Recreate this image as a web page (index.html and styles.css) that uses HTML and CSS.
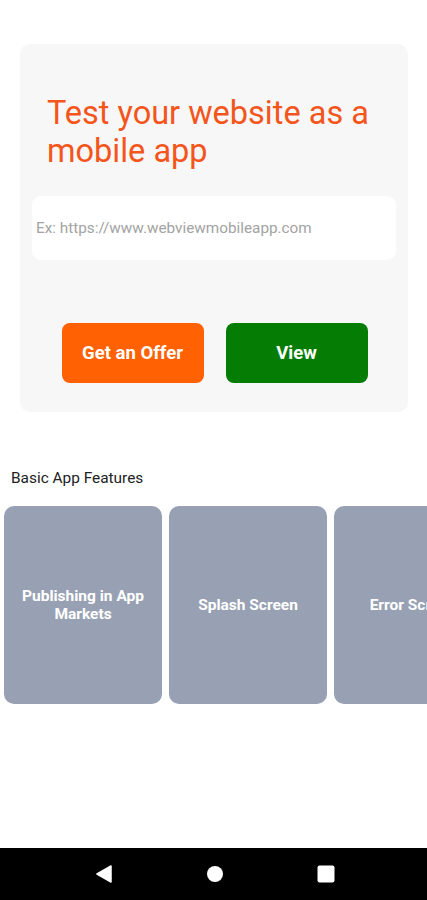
FILE: index.html
```html
<!DOCTYPE html>
<html>
<head>
<meta charset="utf-8">
<link rel="stylesheet" href="styles.css">
</head>
<body>
<div class="page">
  <main class="content">
    <section class="hero">
      <h1 class="hero-title">Test your website as a mobile app</h1>
      <div class="url-input">Ex: https://www.webviewmobileapp.com</div>
      <div class="actions">
        <button class="btn btn-offer">Get an Offer</button>
        <button class="btn btn-view">View</button>
      </div>
    </section>
    <h2 class="section-title">Basic App Features</h2>
    <div class="features">
      <div class="feature">Publishing in App Markets</div>
      <div class="feature">Splash Screen</div>
      <div class="feature">Error Screen</div>
    </div>
  </main>
  <nav class="navbar">
    <svg class="nav-icon" width="18" height="18" viewBox="0 0 18 18"><path d="M16 1 L2 9 L16 17 Z" fill="#fff" stroke="#fff" stroke-width="1.5" stroke-linejoin="round"/></svg>
    <svg class="nav-icon" width="18" height="18" viewBox="0 0 18 18"><circle cx="9" cy="9" r="8" fill="#fff"/></svg>
    <svg class="nav-icon" width="18" height="18" viewBox="0 0 18 18"><rect x="0.5" y="0.5" width="17" height="17" rx="2" fill="#fff"/></svg>
  </nav>
</div>
</body>
</html>
```

FILE: styles.css
```css
* { box-sizing: border-box; }
html, body { margin: 0; padding: 0; background: #fff; }
body { font-family: Roboto, "Noto Sans", Arial, sans-serif; }
.page {
  width: 427px;
  height: 900px;
  display: flex;
  flex-direction: column;
  overflow: hidden;
}
.content { flex: 1; padding-top: 44px; overflow: hidden; }
.hero {
  margin: 0 19px 0 20px;
  background: #f7f7f7;
  border-radius: 10px;
  padding: 50px 12px 29px 12px;
}
.hero-title {
  margin: 0;
  padding-left: 15px;
  font-size: 32.5px;
  line-height: 38px;
  font-weight: 400;
  color: #f4551b;
}
.url-input {
  margin-top: 26px;
  height: 64px;
  background: #fff;
  border-radius: 9px;
  padding-left: 4px;
  display: flex;
  align-items: center;
  font-size: 15.3px;
  color: #a3a3a3;
}
.actions {
  margin-top: 63px;
  display: flex;
  justify-content: center;
  gap: 22px;
  padding-left: 1px;
}
.btn {
  width: 142px;
  height: 60px;
  border: none;
  border-radius: 8px;
  font-family: Roboto, Arial, sans-serif;
  font-weight: 700;
  font-size: 18.5px;
  color: #fff;
}
.btn-offer { background: #ff6103; }
.btn-view { background: #057d05; }
.section-title {
  margin: 56px 0 0 11px;
  font-size: 15.4px;
  line-height: 20px;
  font-weight: 400;
  color: #222;
}
.features {
  margin-top: 18px;
  display: flex;
  gap: 7px;
  padding-left: 4px;
}
.feature {
  flex: 0 0 158px;
  height: 198px;
  background: #98a1b3;
  border-radius: 10px;
  display: flex;
  align-items: center;
  justify-content: center;
  text-align: center;
  padding: 0 14px;
  font-weight: 700;
  font-size: 15.5px;
  line-height: 18px;
  color: #fff;
  white-space: nowrap;
}
.feature:first-child { white-space: normal; }
.navbar {
  height: 52px;
  background: #000;
  display: flex;
  align-items: center;
  justify-content: center;
  gap: 93px;
  padding-left: 2px;
}
```
